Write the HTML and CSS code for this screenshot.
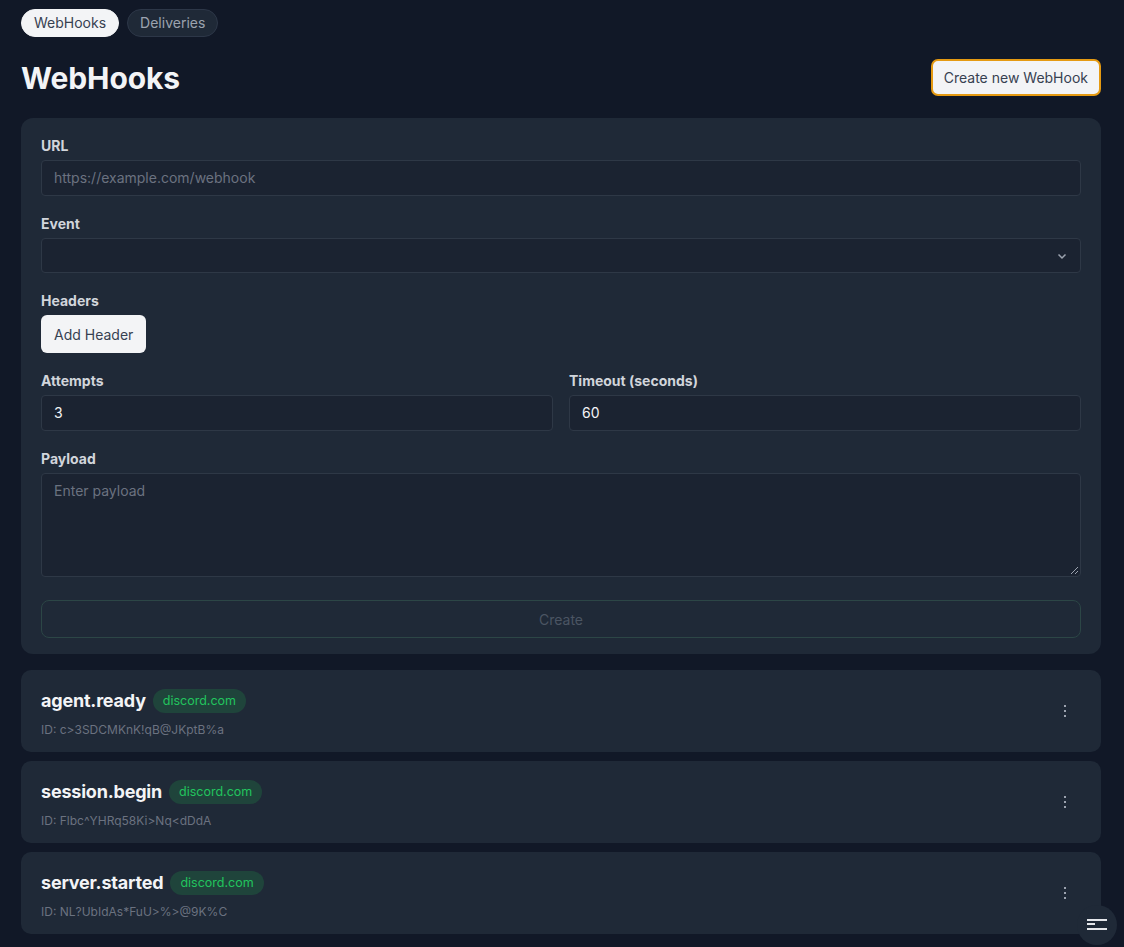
FILE: index.html
```html
<!DOCTYPE html>
<html>
<head>
<meta charset="utf-8">
<link rel="stylesheet" href="styles.css">
</head>
<body>
<div class="page">
  <nav class="tabs">
    <span class="tab active">WebHooks</span>
    <span class="tab">Deliveries</span>
  </nav>
  <header class="head">
    <h1>WebHooks</h1>
    <button class="btn-new">Create new WebHook</button>
  </header>
  <section class="form-card">
    <div class="field">
      <label>URL</label>
      <div class="input placeholder">https://example.com/webhook</div>
    </div>
    <div class="field">
      <label>Event</label>
      <div class="input select">
        <svg width="12" height="12" viewBox="0 0 12 12"><path d="M2.5 4.5 6 8l3.5-3.5" fill="none" stroke="#9ca3af" stroke-width="1.5"/></svg>
      </div>
    </div>
    <div class="field">
      <label>Headers</label>
      <div><button class="btn-add">Add Header</button></div>
    </div>
    <div class="row2">
      <div class="field">
        <label>Attempts</label>
        <div class="input value">3</div>
      </div>
      <div class="field">
        <label>Timeout (seconds)</label>
        <div class="input value">60</div>
      </div>
    </div>
    <div class="field payload">
      <label>Payload</label>
      <div class="input textarea placeholder">Enter payload
        <svg class="grip" width="9" height="9" viewBox="0 0 9 9"><path d="M8 1 1 8M8 5 5 8" stroke="#9ca3af" stroke-width="1"/></svg>
      </div>
    </div>
    <button class="btn-create">Create</button>
  </section>
  <div class="list">
    <article class="hook">
      <div class="hook-main">
        <div class="hook-title"><span class="name">agent.ready</span><span class="badge">discord.com</span></div>
        <div class="hook-id">ID: c&gt;3SDCMKnK!qB@JKptB%a</div>
      </div>
      <span class="kebab"><i></i><i></i><i></i></span>
    </article>
    <article class="hook">
      <div class="hook-main">
        <div class="hook-title"><span class="name">session.begin</span><span class="badge">discord.com</span></div>
        <div class="hook-id">ID: Flbc^YHRq58Ki&gt;Nq&lt;dDdA</div>
      </div>
      <span class="kebab"><i></i><i></i><i></i></span>
    </article>
    <article class="hook">
      <div class="hook-main">
        <div class="hook-title"><span class="name">server.started</span><span class="badge">discord.com</span></div>
        <div class="hook-id">ID: NL?UbIdAs*FuU&gt;%&gt;@9K%C</div>
      </div>
      <span class="kebab"><i></i><i></i><i></i></span>
    </article>
  </div>
</div>
<button class="fab" aria-label="menu"><span class="l1"></span><span class="l2"></span><span class="l3"></span></button>
</body>
</html>
```
FILE: styles.css
```css
* { box-sizing: border-box; }
html, body { margin: 0; padding: 0; background: #111827; }
body { font-family: Inter, "Noto Sans", sans-serif; color: #f3f4f6; height: 947px; overflow: hidden; }
.page { padding: 9px 23px 0 21px; }
.tabs { display: flex; gap: 8px; }
.tab { height: 28px; line-height: 26px; padding: 0 12px; border-radius: 14px; font-size: 14px; color: #9ca3af; background: #1f2937; border: 1px solid #2d3748; }
.tab.active { background: #f3f4f6; color: #374151; border-color: #f3f4f6; }
.head { display: flex; justify-content: space-between; align-items: center; margin-top: 23px; height: 36px; }
.head h1 { margin: 0; font-size: 30px; font-weight: 700; color: #f3f4f6; letter-spacing: -0.1px; }
.btn-new { height: 37px; padding: 0 11px; margin-top: -1px; font-family: inherit; font-size: 14px; color: #374151; background: #f3f4f6; border: 2px solid #e59a12; border-radius: 7px; }
.form-card { margin-top: 22px; background: #1f2937; border-radius: 12px; padding: 18px 20px 16px; display: flex; flex-direction: column; }
.field { display: flex; flex-direction: column; margin-bottom: 18px; }
.field label { font-size: 14px; font-weight: 700; line-height: 20px; color: #d1d5db; margin-bottom: 4px; }
.input { height: 36px; border: 1px solid #2e3846; background: #1b2331; border-radius: 4px; font-size: 14px; line-height: 34px; padding: 0 12px; }
.placeholder { color: #6b7280; }
.value { color: #f3f4f6; }
.select { height: 35px; display: flex; justify-content: flex-end; align-items: center; padding-right: 12px; }
.row2 { display: grid; grid-template-columns: 1fr 1fr; gap: 16px; }
.btn-add { height: 38px; padding: 0 13px; font-family: inherit; font-size: 14px; color: #374151; background: #f3f4f6; border: none; border-radius: 6px; }
.payload { margin-bottom: 23px; }
.textarea { height: 104px; line-height: 20px; padding: 7px 12px; position: relative; }
.grip { position: absolute; right: 1px; bottom: 1px; }
.btn-create { height: 38px; font-family: inherit; font-size: 14px; color: #4b5563; background: #1f2937; border: 1px solid #2c4646; border-radius: 8px; }
.list { margin-top: 16px; display: flex; flex-direction: column; gap: 9px; }
.hook { background: #1f2937; border-radius: 10px; padding: 4px 21px 0 20px; display: flex; align-items: center; justify-content: space-between; height: 82px; }
.hook-title { display: flex; align-items: center; gap: 7px; height: 24px; }
.name { font-size: 18px; font-weight: 700; color: #f3f4f6; letter-spacing: -0.2px; }
.badge { height: 24px; line-height: 24px; padding: 0 10px; border-radius: 12px; background: #1f443b; color: #22c55e; font-size: 12.5px; }
.hook-id { margin-top: 9px; font-size: 12px; line-height: 16px; color: #6b7280; }
.kebab { display: flex; flex-direction: column; gap: 3px; margin-right: 14px; margin-top: -4px; }
.kebab i { display: block; width: 2px; height: 2px; background: #9ca3af; }
.fab { position: fixed; right: 7px; bottom: 2px; width: 40px; height: 40px; border-radius: 50%; background: #1f2937; border: none; padding: 0; }
.fab span { position: absolute; height: 2px; background: #e5e7eb; left: 10px; }
.fab .l1 { top: 14px; width: 20px; }
.fab .l2 { top: 18px; width: 8px; }
.fab .l3 { top: 23px; width: 20px; }
```
